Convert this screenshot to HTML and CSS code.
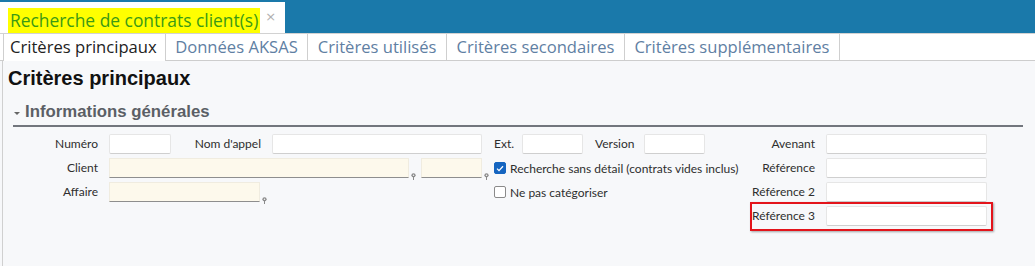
FILE: index.html
```html
<!DOCTYPE html>
<html lang="fr">
<head>
<meta charset="utf-8">
<title>Recherche de contrats client(s)</title>
<link rel="stylesheet" href="styles.css">
</head>
<body>
<div class="topbar">
  <div class="doc-tab">
    <span class="doc-title">Recherche de contrats client(s)</span>
    <span class="close">×</span>
  </div>
</div>
<div class="tabs">
  <div class="tab active">Critères principaux</div>
  <div class="tab">Données AKSAS</div>
  <div class="tab">Critères utilisés</div>
  <div class="tab">Critères secondaires</div>
  <div class="tab">Critères supplémentaires</div>
</div>
<div class="content">
  <h1 class="page-title">Critères principaux</h1>
  <div class="section-head"><span class="caret"></span>Informations générales</div>
  <div class="form">
    <!-- row 1 -->
    <div class="lbl">Numéro</div>
    <div class="cell">
      <span class="input w62"></span>
      <span class="lbl inline w101">Nom d'appel</span>
      <span class="input w210"></span>
    </div>
    <div class="cell">
      <span class="lbl-l w28">Ext.</span>
      <span class="input w61"></span>
      <span class="lbl-l w49 ml12">Version</span>
      <span class="input w61"></span>
    </div>
    <div class="lbl">Avenant</div>
    <div class="cell"><span class="input w161"></span></div>

    <!-- row 2 -->
    <div class="lbl">Client</div>
    <div class="cell">
      <span class="input lookup w300"></span>
      <span class="pin"><svg width="5" height="7" viewBox="0 0 5 7"><circle cx="2.5" cy="2.3" r="2.1" fill="#8a8a8a"/><circle cx="2.5" cy="2.3" r="0.8" fill="#f7f8fa"/><rect x="2" y="4" width="1" height="3" fill="#8a8a8a"/></svg></span>
      <span class="input lookup w61"></span>
      <span class="pin"><svg width="5" height="7" viewBox="0 0 5 7"><circle cx="2.5" cy="2.3" r="2.1" fill="#8a8a8a"/><circle cx="2.5" cy="2.3" r="0.8" fill="#f7f8fa"/><rect x="2" y="4" width="1" height="3" fill="#8a8a8a"/></svg></span>
    </div>
    <div class="cell">
      <span class="check checked"><svg width="8" height="7" viewBox="0 0 8 7"><path d="M1 3.6 L3 5.6 L7 1.2" fill="none" stroke="#fff" stroke-width="1.3"/></svg></span>
      <span class="check-text">Recherche sans détail (contrats vides inclus)</span>
    </div>
    <div class="lbl">Référence</div>
    <div class="cell"><span class="input w161"></span></div>

    <!-- row 3 -->
    <div class="lbl">Affaire</div>
    <div class="cell">
      <span class="input lookup w151"></span>
      <span class="pin"><svg width="5" height="7" viewBox="0 0 5 7"><circle cx="2.5" cy="2.3" r="2.1" fill="#8a8a8a"/><circle cx="2.5" cy="2.3" r="0.8" fill="#f7f8fa"/><rect x="2" y="4" width="1" height="3" fill="#8a8a8a"/></svg></span>
    </div>
    <div class="cell">
      <span class="check"></span>
      <span class="check-text">Ne pas catégoriser</span>
    </div>
    <div class="lbl">Référence 2</div>
    <div class="cell"><span class="input w161"></span></div>

    <!-- row 4 -->
    <div class="highlight">
      <div class="lbl">Référence 3</div>
      <div class="cell"><span class="input w161"></span></div>
    </div>
  </div>
</div>
</body>
</html>
```

FILE: styles.css
```css
* { box-sizing: border-box; }

html, body {
  margin: 0;
  padding: 0;
}

body {
  width: 1035px;
  height: 266px;
  overflow: hidden;
  background: #f7f8fa;
  font-family: Lato, "Open Sans", sans-serif;
  color: #2e2e2e;
}

/* ---------- document tab bar ---------- */
.topbar {
  height: 33px;
  background: #1a79aa;
  display: flex;
  align-items: flex-end;
}

.doc-tab {
  width: 285px;
  height: 31px;
  background: #fff;
  display: flex;
  align-items: flex-end;
  padding-left: 8px;
}

.doc-title {
  background: #ffff00;
  color: #3b9a15;
  font-family: "Open Sans", sans-serif;
  font-size: 17.4px;
  height: 25px;
  line-height: 25px;
  padding: 0 2px;
  white-space: nowrap;
}

.close {
  color: #b0b0b0;
  font-family: "DejaVu Sans", sans-serif;
  font-size: 13px;
  margin-left: 5px;
  align-self: center;
  margin-top: -2px;
}

/* ---------- tabs ---------- */
.tabs {
  height: 28px;
  background: #fff;
  border-top: 1px solid #d2d2d2;
  border-bottom: 1px solid #cdcdcd;
  display: flex;
  padding-left: 3px;
}

.tab {
  font-family: "Open Sans", sans-serif;
  font-size: 16.6px;
  color: #5f80a3;
  padding: 0 9.5px;
  line-height: 26px;
  border-right: 1px solid #cfcfcf;
  white-space: nowrap;
}

.tab.active {
  color: #222;
  border-left: 1px solid #cfcfcf;
  padding: 0 8px 0 6px;
  background: #fff;
  height: 27px;
  margin-bottom: -1px;
}

/* ---------- content ---------- */
.content {
  margin-left: 2px;
  border-left: 1px solid #d0d0d0;
  height: 205px;
  padding-top: 5px;
}

.page-title {
  margin: 0 0 0 5px;
  font-family: "Liberation Sans", Arial, sans-serif;
  font-weight: bold;
  font-size: 20px;
  line-height: 24px;
  color: #111;
}

.section-head {
  margin: 12px 0 0 10px;
  width: 1010px;
  border-bottom: 2px solid #72767d;
  font-family: "Liberation Sans", Arial, sans-serif;
  font-weight: bold;
  font-size: 16.8px;
  line-height: 20px;
  color: #5b5f66;
  display: flex;
  align-items: center;
  padding-bottom: 3px;
}

.caret {
  width: 0;
  height: 0;
  border-left: 3px solid transparent;
  border-right: 3px solid transparent;
  border-top: 3px solid #666;
  margin: 2px 5px 0 1px;
}

/* ---------- form grid ---------- */
.form {
  display: grid;
  grid-template-columns: 96px 385px 251px 81px 161px;
  grid-auto-rows: 20px;
  row-gap: 4px;
  margin: 7px 0 0 10px;
  font-size: 12px;
}

.lbl {
  text-align: right;
  padding-right: 11px;
  line-height: 20px;
  white-space: nowrap;
}

.lbl.inline {
  display: inline-block;
}

.lbl-l {
  display: inline-block;
  line-height: 20px;
  white-space: nowrap;
}

.cell {
  display: flex;
  align-items: center;
  height: 20px;
}

.input {
  display: inline-block;
  height: 20px;
  background: #fff;
  border: 1px solid #e6e6e6;
  border-bottom-color: #cfcfcf;
  border-radius: 2px;
  flex: none;
}

.input.lookup {
  background: #fdf9ec;
  border-color: #f0ece0;
  border-bottom-color: #8e8e8e;
  border-radius: 0;
}

.pin {
  width: 12px;
  height: 20px;
  display: flex;
  justify-content: flex-start;
  align-items: flex-end;
  flex: none;
  padding-left: 2px;
  margin-bottom: -3px;
}

.pin svg { display: block; }

.w28 { width: 28px; }
.w49 { width: 49px; }
.w61 { width: 61px; }
.w62 { width: 62px; }
.w101 { width: 101px; }
.w151 { width: 151px; }
.w161 { width: 161px; }
.w210 { width: 210px; }
.w300 { width: 300px; }
.ml12 { margin-left: 12px; }

.check {
  width: 12px;
  height: 12px;
  border: 1px solid #8a8a8a;
  border-radius: 2px;
  background: #fff;
  flex: none;
  display: flex;
  align-items: center;
  justify-content: center;
}

.check.checked {
  background: #1565c0;
  border-color: #1565c0;
}

.check-text {
  margin-left: 4px;
  white-space: nowrap;
}

/* ---------- highlighted field (annotation) ---------- */
.highlight {
  grid-column: 4 / 6;
  display: grid;
  grid-template-columns: 81px 161px;
  position: relative;
}

.highlight::after {
  content: "";
  position: absolute;
  left: 5px;
  top: -4px;
  right: -6px;
  bottom: -5px;
  border: 2px solid #e3141b;
  box-shadow: 1px 1px 2px rgba(0, 0, 0, 0.35);
  pointer-events: none;
}
```
